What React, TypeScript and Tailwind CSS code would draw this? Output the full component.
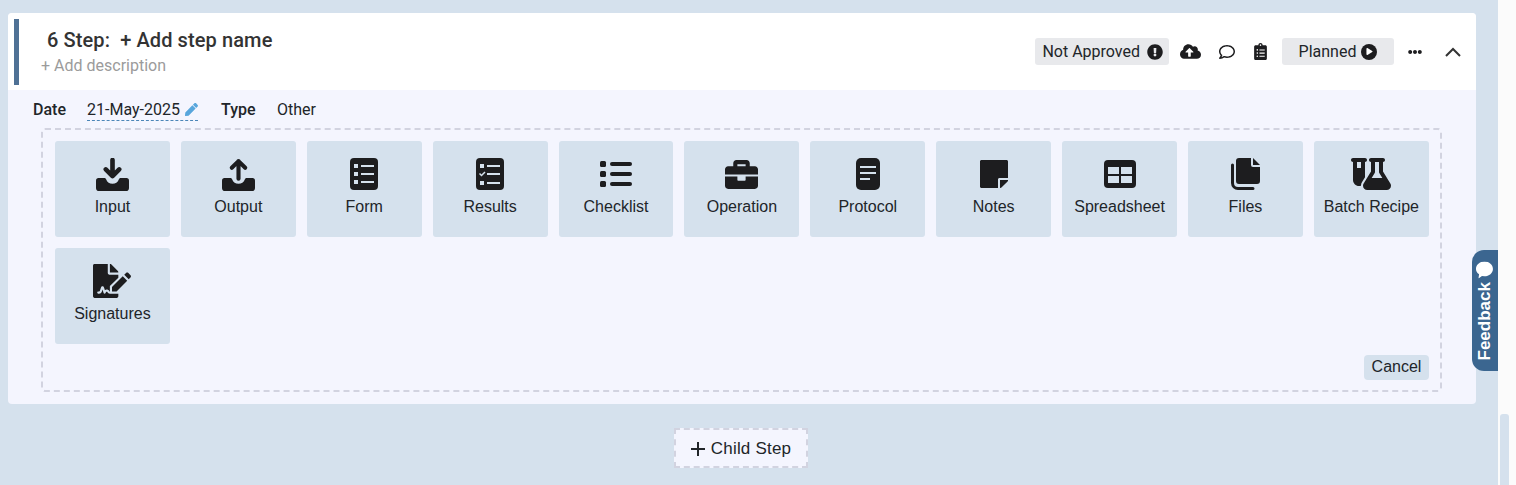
import type { ReactNode } from "react";
import { FaBriefcase, FaClipboardList, FaCloudUploadAlt, FaEllipsisH, FaExclamationCircle, FaFileSignature, FaPen, FaPlay, FaRegComment, FaStickyNote } from "react-icons/fa";
import { FaFlaskVial } from "react-icons/fa6";

const tileBg = "#d5e1ed";

const InputIcon = () => (
  <svg width="33" height="33" viewBox="0 0 32 32" className="text-[#1d1d1f]">
    <path d="M0 22a2.500 2.500 0 0 1 2.500-2.500H8c1 0 1.500.5 2 1.500 1 2.500 3 4 6 4s5-1.500 6-4c.5-1 1-1.500 2-1.500h5.500A2.500 2.500 0 0 1 32 22v7a3 3 0 0 1-3 3H3a3 3 0 0 1-3-3z" fill="currentColor" />
    <path d="M16 2v15M9.500 11l6.500 6.500 6.500-6.500" fill="none" stroke="currentColor" strokeWidth="4.500" strokeLinecap="round" strokeLinejoin="round" />
  </svg>
);

const OutputIcon = () => (
  <svg width="33" height="33" viewBox="0 0 32 32" className="text-[#1d1d1f]">
    <path d="M0 22a2.500 2.500 0 0 1 2.500-2.500H8c1 0 1.500.5 2 1.500 1 2.500 3 4 6 4s5-1.500 6-4c.5-1 1-1.500 2-1.500h5.500A2.500 2.500 0 0 1 32 22v7a3 3 0 0 1-3 3H3a3 3 0 0 1-3-3z" fill="currentColor" />
    <path d="M16 20V3M9.500 9.500 16 3l6.500 6.500" fill="none" stroke="currentColor" strokeWidth="4" strokeLinecap="round" strokeLinejoin="round" />
  </svg>
);

const FormIcon = () => (
  <svg width="28" height="32" viewBox="0 0 28 32">
    <rect width="28" height="32" rx="4" fill="#1d1d1f" />
    <g fill={tileBg}>
      <rect x="4" y="6" width="4" height="4" />
      <rect x="4" y="14" width="4" height="4" />
      <rect x="4" y="22" width="4" height="4" />
      <rect x="11" y="7" width="13" height="2" />
      <rect x="11" y="15" width="13" height="2" />
      <rect x="11" y="23" width="13" height="2" />
    </g>
  </svg>
);

const ResultsIcon = () => (
  <svg width="28" height="32" viewBox="0 0 28 32">
    <rect width="28" height="32" rx="4" fill="#1d1d1f" />
    <g fill={tileBg}>
      <rect x="4" y="6" width="4" height="4" />
      <rect x="4" y="23" width="4" height="4" />
      <rect x="11" y="7" width="13" height="2" />
      <rect x="11" y="15" width="13" height="2" />
      <rect x="11" y="24" width="13" height="2" />
    </g>
    <path d="M3.500 15.500 5.500 17.500 9 14" fill="none" stroke={tileBg} strokeWidth="1.500" />
  </svg>
);

const ChecklistIcon = () => (
  <svg width="32" height="26" viewBox="0 0 32 26" fill="#1d1d1f">
    <rect y="0" width="6" height="6" rx="1.500" />
    <rect y="10" width="6" height="6" rx="1.500" />
    <rect y="20" width="6" height="6" rx="1.500" />
    <rect x="10" y="1" width="22" height="4" rx="2" />
    <rect x="10" y="11" width="22" height="4" rx="2" />
    <rect x="10" y="21" width="22" height="4" rx="2" />
  </svg>
);

const ProtocolIcon = () => (
  <svg width="24" height="32" viewBox="0 0 24 32">
    <rect width="24" height="32" rx="5" fill="#1d1d1f" />
    <g fill={tileBg}>
      <rect x="4" y="8" width="16" height="2" />
      <rect x="4" y="14" width="16" height="2" />
      <rect x="4" y="20" width="10" height="2" />
    </g>
  </svg>
);

const SpreadsheetIcon = () => (
  <svg width="32" height="28" viewBox="0 0 32 28">
    <rect width="32" height="28" rx="4" fill="#1d1d1f" />
    <g fill={tileBg}>
      <rect x="4" y="7" width="11" height="7" />
      <rect x="17" y="7" width="11" height="7" />
      <rect x="4" y="16" width="11" height="7" />
      <rect x="17" y="16" width="11" height="7" />
    </g>
  </svg>
);

const FilesIcon = () => (
  <svg width="29" height="32" viewBox="0 0 29 32" fill="#1d1d1f">
    <path d="M8 0h12v7a2 2 0 0 0 2 2h7v14a3 3 0 0 1-3 3H8a3 3 0 0 1-3-3V3a3 3 0 0 1 3-3z" />
    <path d="M22 0l7 7h-7z" />
    <path d="M1.500 7v18A5.500 5.500 0 0 0 7 30.500h15" fill="none" stroke="#1d1d1f" strokeWidth="3" strokeLinecap="round" />
  </svg>
);

const tiles: { label: string; icon: ReactNode }[] = [
  { label: "Input", icon: <InputIcon /> },
  { label: "Output", icon: <OutputIcon /> },
  { label: "Form", icon: <FormIcon /> },
  { label: "Results", icon: <ResultsIcon /> },
  { label: "Checklist", icon: <ChecklistIcon /> },
  { label: "Operation", icon: <FaBriefcase size={33} className="text-[#1d1d1f]" /> },
  { label: "Protocol", icon: <ProtocolIcon /> },
  { label: "Notes", icon: <FaStickyNote size={32} className="text-[#1d1d1f]" /> },
  { label: "Spreadsheet", icon: <SpreadsheetIcon /> },
  { label: "Files", icon: <FilesIcon /> },
  { label: "Batch Recipe", icon: <FaFlaskVial size={40} className="text-[#1d1d1f]" /> },
  { label: "Signatures", icon: <FaFileSignature size={38} className="text-[#1d1d1f]" /> },
];

function Tile({ label, icon }: { label: string; icon: ReactNode }) {
  return (
    <div className="flex h-[96px] w-[114.9px] flex-col items-center rounded-[3px] bg-[#d5e1ed] pt-[17px]">
      <div className="flex h-[32px] items-center justify-center">{icon}</div>
      <span className="mt-[6px] whitespace-nowrap font-['Liberation_Sans',sans-serif] text-[16px] leading-[22px] text-[#212529]">
        {label}
      </span>
    </div>
  );
}

export default function App() {
  return (
    <div className="relative flex h-[485px] w-full overflow-hidden bg-[#d5e1ed] font-['Roboto',sans-serif] text-[#212529]">
      <main className="w-[1498px] shrink-0 pl-[8px] pt-[13px]">
        <section className="w-[1468px] overflow-hidden rounded-[4px] bg-[#f4f5fe]">
          <header className="flex h-[77px] items-center justify-between bg-white pl-[6px] pr-[15px]">
            <div className="flex h-[66px] items-start border-l-[5px] border-[#4f7195] pl-[28px]">
              <div className="flex flex-col">
                <h2 className="pt-[8px] text-[20px] font-medium leading-[26px] tracking-[0.1px] text-[#333333]">
                  <span className="whitespace-pre">6 Step:  + Add step name</span>
                </h2>
                <span className="-ml-[6px] pt-[1px] text-[16px] leading-[24px] text-[#9b9b9b]">+ Add description</span>
              </div>
            </div>
            <div className="flex items-center">
              <span className="flex h-[27px] w-[134px] items-center justify-end gap-[7px] rounded-[3px] bg-[#e8e9ec] pr-[6px] text-[16px]">
                Not Approved <FaExclamationCircle size={16} className="text-[#1d1d1f]" />
              </span>
              <FaCloudUploadAlt size={21} className="ml-[11px] text-[#1d1d1f]" />
              <FaRegComment size={16} className="ml-[18px] text-[#1d1d1f]" />
              <FaClipboardList size={17} className="ml-[17px] text-[#1d1d1f]" />
              <span className="ml-[13px] flex h-[27px] w-[112px] items-center justify-center gap-[5px] rounded-[3px] bg-[#e8e9ec] text-[16px]">
                Planned
                <span className="flex h-[16px] w-[16px] items-center justify-center rounded-full bg-[#1d1d1f]">
                  <FaPlay size={7} className="ml-[1px] text-white" />
                </span>
              </span>
              <FaEllipsisH size={14} className="ml-[14px] text-[#1d1d1f]" />
              <svg width="16" height="10" viewBox="0 0 16 10" className="ml-[23px]">
                <path d="M1 9l7-7 7 7" fill="none" stroke="#333333" strokeWidth="2" />
              </svg>
            </div>
          </header>

          <div className="flex h-[38px] items-center pl-[25px] pt-[2px] text-[16px] leading-[24px]">
            <span className="w-[54px] font-medium">Date</span>
            <span className="flex h-[21px] w-[111px] items-center gap-[5px] border-b border-dashed border-[#4b86b8]">
              21-May-2025
              <FaPen size={13} className="text-[#58a6dc]" />
            </span>
            <span className="ml-[23px] w-[56px] font-medium">Type</span>
            <span>Other</span>
          </div>

          <div className="ml-[33px] h-[264px] w-[1401px] rounded-[4px] border-2 border-dashed border-[#d2d3e0] pl-[12px] pt-[11px]">
            <div className="flex flex-wrap gap-x-[11px] gap-y-[11px]">
              {tiles.map((tile) => (
                <Tile key={tile.label} label={tile.label} icon={tile.icon} />
              ))}
            </div>
            <div className="flex justify-end pr-[11px] pt-[11px]">
              <button className="h-[25px] w-[65px] rounded-[4px] bg-[#d5e1ed] pb-[2px] font-['Liberation_Sans',sans-serif] text-[16px] leading-[22px]">
                Cancel
              </button>
            </div>
          </div>
          <div className="h-[12px]" />
        </section>

        <div className="mt-[24px] flex w-[1468px] justify-center pr-[2px]">
          <button className="flex h-[40px] w-[134px] items-center justify-center gap-[6px] border-2 border-dashed border-[#d2d3e0] bg-[#f4f5fe] pt-[1px] font-['Liberation_Sans',sans-serif] text-[17px] tracking-[0.2px] text-[#212529]">
            <svg width="14" height="14" viewBox="0 0 14 14">
              <path d="M7 0v14M0 7h14" stroke="#212529" strokeWidth="2" />
            </svg>
            Child Step
          </button>
        </div>
      </main>

      <aside className="flex w-[18px] shrink-0 justify-start bg-[#fbfbfb] pl-[2px]">
        <div className="mt-[414px] h-[71px] w-[9px] rounded-t-[3px] bg-[#d5e1ed]" />
      </aside>

      <div className="absolute left-[1472px] top-[250px] flex h-[121px] w-[26px] items-center justify-center rounded-l-[12px] bg-[#3b6690]">
        <div className="flex rotate-[-90deg] items-center gap-[4px] whitespace-nowrap font-['Liberation_Sans',sans-serif] text-[17px] font-bold text-white">
          Feedback
          <svg width="17" height="17" viewBox="0 0 17 17" className="rotate-90">
            <path d="M8.500 0C13.200 0 17 3.300 17 7.500c0 4-3.800 7.300-8.500 7.300L6 14.600 2.500 17l.6-4.100C1.200 11.600 0 9.700 0 7.500 0 3.300 3.800 0 8.500 0z" fill="#fff" />
          </svg>
        </div>
      </div>
    </div>
  );
}
